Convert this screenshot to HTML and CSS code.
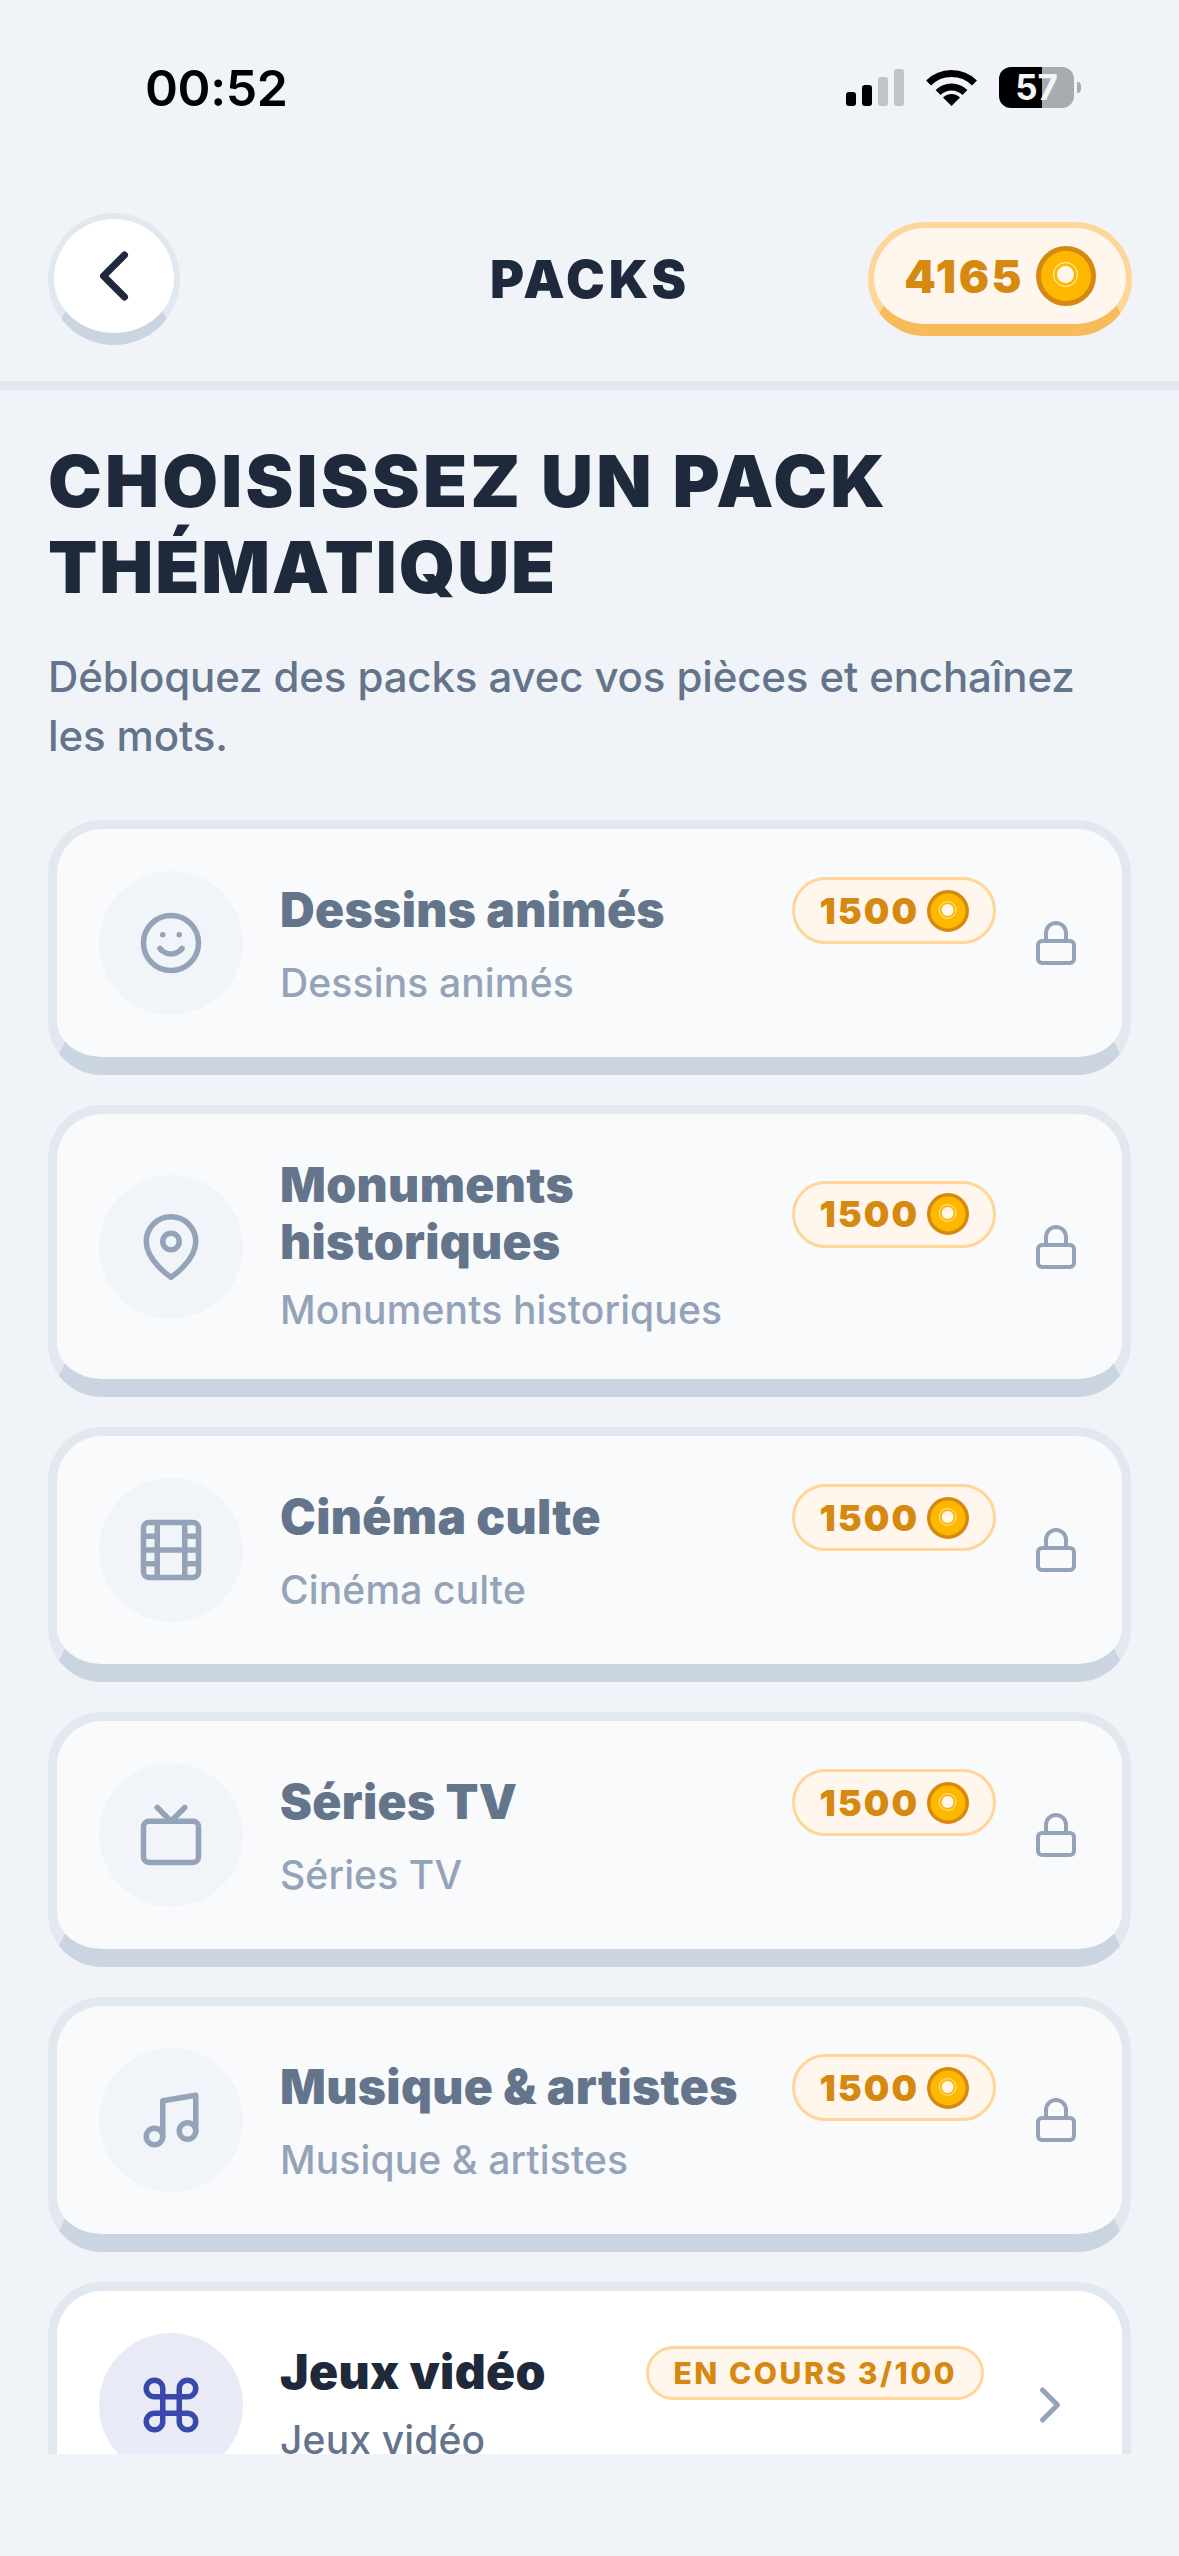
FILE: index.html
```html
<!DOCTYPE html>
<html lang="fr">
<head>
<meta charset="utf-8">
<title>Packs</title>
<link rel="stylesheet" href="styles.css">
</head>
<body>
<svg class="defs" aria-hidden="true">
  <symbol id="coin" viewBox="0 0 60 60">
    <circle cx="30" cy="30" r="27.5" fill="#ffb800" stroke="#d68910" stroke-width="5"/>
    <circle cx="29.5" cy="28.5" r="12" fill="none" stroke="#fff7ed" stroke-width="1"/>
    <circle cx="29.5" cy="28.5" r="8.5" fill="#fff7ed"/>
  </symbol>
  <symbol id="lock" viewBox="0 0 24 24">
    <rect x="3" y="11" width="18" height="11" rx="2"/>
    <path d="M7 11V7a5 5 0 0 1 10 0v4"/>
  </symbol>
</svg>
<div class="app">
  <div class="status">
    <span class="time">00:52</span>
    <div class="status-icons">
      <div class="signal">
        <i class="bar b1"></i><i class="bar b2"></i><i class="bar b3 off"></i><i class="bar b4 off"></i>
      </div>
      <svg class="wifi" viewBox="0 0 51 37" width="51" height="37">
        <path d="M2.52 14.02A32.5 32.5 0 0 1 48.48 14.02" fill="none" stroke="#000" stroke-width="7"/>
        <path d="M12.07 23.57A19 19 0 0 1 38.93 23.57" fill="none" stroke="#000" stroke-width="7"/>
        <path d="M25.5 37L17 28.5A12 12 0 0 1 34 28.5Z" fill="#000"/>
      </svg>
      <div class="battery">57</div>
    </div>
  </div>
  <header class="topbar">
    <button class="back" type="button" aria-label="Retour">
      <svg class="ico" viewBox="0 0 24 24" width="84" height="84"><path d="M15 18l-6-6 6-6"/></svg>
    </button>
    <h1 class="page-title">PACKS</h1>
    <div class="wallet">
      <span>4165</span>
      <svg width="60" height="60"><use href="#coin"/></svg>
    </div>
  </header>
  <main class="scroll">
    <h2 class="headline"><span class="line-a">CHOISISSEZ UN PACK</span> <span class="line-b">THÉMATIQUE</span></h2>
    <p class="lead">Débloquez des packs avec vos pièces et enchaînez les mots.</p>
    <div class="cards">
      <article class="card locked">
        <div class="round">
          <svg class="ico" viewBox="0 0 24 24" width="66" height="66"><circle cx="12" cy="12" r="10"/><path d="M8 14s1.5 2 4 2 4-2 4-2"/><path d="M9 9h.01M15 9h.01"/></svg>
        </div>
        <div class="body">
          <div class="row"><h3 class="name">Dessins animés</h3><div class="tag"><span>1500</span><svg width="42" height="42"><use href="#coin"/></svg></div></div>
          <p class="sub">Dessins animés</p>
        </div>
        <svg class="ico end" viewBox="0 0 24 24" width="48" height="48"><use href="#lock"/></svg>
      </article>
      <article class="card locked">
        <div class="round">
          <svg class="ico" viewBox="0 0 24 24" width="66" height="66"><path d="M21 10c0 7-9 13-9 13s-9-6-9-13a9 9 0 0 1 18 0z"/><circle cx="12" cy="10" r="3"/></svg>
        </div>
        <div class="body">
          <div class="row"><h3 class="name">Monuments historiques</h3><div class="tag"><span>1500</span><svg width="42" height="42"><use href="#coin"/></svg></div></div>
          <p class="sub">Monuments historiques</p>
        </div>
        <svg class="ico end" viewBox="0 0 24 24" width="48" height="48"><use href="#lock"/></svg>
      </article>
      <article class="card locked">
        <div class="round">
          <svg class="ico" viewBox="0 0 24 24" width="66" height="66"><rect x="2" y="2" width="20" height="20" rx="2"/><path d="M7 2v20M17 2v20M2 12h20M2 7h5M2 17h5M17 17h5M17 7h5"/></svg>
        </div>
        <div class="body">
          <div class="row"><h3 class="name">Cinéma culte</h3><div class="tag"><span>1500</span><svg width="42" height="42"><use href="#coin"/></svg></div></div>
          <p class="sub">Cinéma culte</p>
        </div>
        <svg class="ico end" viewBox="0 0 24 24" width="48" height="48"><use href="#lock"/></svg>
      </article>
      <article class="card locked">
        <div class="round">
          <svg class="ico" viewBox="0 0 24 24" width="66" height="66"><rect x="2" y="7" width="20" height="15" rx="2"/><path d="M17 2l-5 5-5-5"/></svg>
        </div>
        <div class="body">
          <div class="row"><h3 class="name">Séries TV</h3><div class="tag"><span>1500</span><svg width="42" height="42"><use href="#coin"/></svg></div></div>
          <p class="sub">Séries TV</p>
        </div>
        <svg class="ico end" viewBox="0 0 24 24" width="48" height="48"><use href="#lock"/></svg>
      </article>
      <article class="card locked">
        <div class="round">
          <svg class="ico" viewBox="0 0 24 24" width="66" height="66"><path d="M9 18V5l12-2v13"/><circle cx="6" cy="18" r="3"/><circle cx="18" cy="16" r="3"/></svg>
        </div>
        <div class="body">
          <div class="row"><h3 class="name">Musique &amp; artistes</h3><div class="tag"><span>1500</span><svg width="42" height="42"><use href="#coin"/></svg></div></div>
          <p class="sub">Musique &amp; artistes</p>
        </div>
        <svg class="ico end" viewBox="0 0 24 24" width="48" height="48"><use href="#lock"/></svg>
      </article>
      <article class="card active">
        <div class="round">
          <svg class="ico" viewBox="0 0 24 24" width="66" height="66"><path d="M15 6v12a3 3 0 1 0 3-3H6a3 3 0 1 0 3 3V6a3 3 0 1 0-3 3h12a3 3 0 1 0-3-3"/></svg>
        </div>
        <div class="body">
          <div class="row"><h3 class="name">Jeux vidéo</h3><div class="tag progress"><span>EN COURS 3/100</span></div></div>
          <p class="sub">Jeux vidéo</p>
        </div>
        <svg class="ico end" viewBox="0 0 24 24" width="60" height="60"><path d="M9 18l6-6-6-6"/></svg>
      </article>
    </div>
  </main>
</div>
</body>
</html>
```

FILE: styles.css
```css
* { box-sizing: border-box; }
html, body { margin: 0; padding: 0; }
body {
  width: 1179px;
  height: 2556px;
  overflow: hidden;
  background: #f0f4f8;
  font-family: Inter, "Noto Sans", sans-serif;
  color: #1e293b;
}
.defs { display: none; }
.app {
  height: 2556px;
  display: flex;
  flex-direction: column;
  padding-bottom: 102px;
}

/* status bar */
.status {
  flex: none;
  height: 175px;
  display: flex;
  align-items: center;
  justify-content: space-between;
  padding: 0 98px 0 145px;
}
.time {
  font-size: 50px;
  font-weight: 600;
  letter-spacing: -0.4px;
  color: #000;
  line-height: 1;
}
.status-icons { display: flex; align-items: center; gap: 22px; }
.signal { display: flex; align-items: flex-end; gap: 6px; height: 37px; }
.bar { width: 10px; background: #000; border-radius: 3px; display: block; }
.bar.off { background: #bfc4c9; }
.b1 { height: 14px; }
.b2 { height: 21px; }
.b3 { height: 29px; }
.b4 { height: 37px; }
.battery {
  position: relative;
  width: 75px;
  height: 41px;
  margin-right: 7px;
  border-radius: 12px;
  background: linear-gradient(90deg, #000 0 57.3%, #a8acb0 57.3% 100%);
  color: #f4f5f6;
  font-size: 35px;
  font-weight: 700;
  line-height: 41px;
  text-align: center;
}
.battery::after {
  content: "";
  position: absolute;
  left: 78px;
  top: 15px;
  width: 4px;
  height: 11px;
  border-radius: 0 5px 5px 0;
  background: #a8acb0;
}

/* top bar */
.topbar {
  flex: none;
  display: grid;
  grid-template-columns: 1fr auto 1fr;
  align-items: center;
  padding: 38px 47px 36px 48px;
  border-bottom: 9px solid #e2e8f0;
}
.back {
  justify-self: start;
  width: 132px;
  height: 132px;
  padding: 0;
  display: flex;
  align-items: center;
  justify-content: center;
  background: #fff;
  border: 6px solid #e2e8f0;
  border-bottom: 12px solid #cbd5e1;
  border-radius: 50%;
}
.back .ico { stroke: #1e293b; }
.page-title {
  margin: 0;
  padding-top: 2px;
  font-size: 52px;
  font-weight: 900;
  letter-spacing: 3.9px;
  line-height: 1.2;
  color: #1e293b;
}
.wallet {
  justify-self: end;
  width: 264px;
  height: 114px;
  display: flex;
  align-items: center;
  justify-content: flex-end;
  gap: 12px;
  padding-right: 30px;
  background: #fff7ed;
  border: 6px solid #ffd699;
  border-bottom: 12px solid #f7bb5b;
  border-radius: 57px;
  color: #d68910;
  font-size: 45px;
  font-weight: 900;
  letter-spacing: 2.5px;
}
.wallet svg, .tag svg { display: block; flex: none; }

/* scrolling area */
.scroll {
  flex: 1;
  min-height: 0;
  overflow: hidden;
  padding: 48px 48px 0;
}
.headline {
  margin: 0;
  font-size: 72px;
  font-weight: 900;
  line-height: 86.4px;
  color: #1e293b;
}
.line-a { letter-spacing: 3.2px; }
.line-b { letter-spacing: 1.9px; }
.lead {
  margin: 36px 0 54.4px;
  font-size: 42px;
  font-weight: 500;
  line-height: 59.4px;
  letter-spacing: -0.13px;
  color: #64748b;
}

/* cards */
.cards { display: flex; flex-direction: column; gap: 30px; }
.card {
  display: flex;
  align-items: center;
  gap: 36px;
  padding: 42px;
  border: 9px solid #e2e8f0;
  border-bottom: 18px solid #cbd5e1;
  border-radius: 54px;
  background: #fff;
}
.card.locked { background: #f8fafc; }
.round {
  flex: none;
  width: 144px;
  height: 144px;
  border-radius: 50%;
  display: flex;
  align-items: center;
  justify-content: center;
}
.locked .round { background: #f1f5f9; }
.active .round { background: #e8eaf6; }
.ico {
  display: block;
  flex: none;
  fill: none;
  stroke: #94a3b8;
  stroke-width: 2;
  stroke-linecap: round;
  stroke-linejoin: round;
}
.active .round .ico { stroke: #3949ab; }
.body { flex: 1; min-width: 0; padding-left: 1px; }
.row {
  display: flex;
  align-items: center;
  justify-content: space-between;
  gap: 24px;
}
.name {
  margin: 0;
  font-size: 48px;
  font-weight: 900;
  line-height: 57px;
  letter-spacing: 0.35px;
}
.locked .name { color: #64748b; }
.active .name { color: #1e293b; }
.sub {
  margin: 12px 0 0;
  font-size: 39px;
  font-weight: 500;
  line-height: 55px;
  letter-spacing: 0.15px;
}
.locked .sub { color: #94a3b8; }
.active .sub { color: #64748b; }
.tag {
  flex: none;
  display: flex;
  align-items: center;
  gap: 8px;
  margin: 1px 0 -1px;
  padding: 9.5px 24px 9.5px 25px;
  background: #fff7ed;
  border: 3px solid #ffd699;
  border-radius: 34px;
  color: #d68910;
  font-size: 36px;
  font-weight: 900;
  line-height: 42px;
  letter-spacing: 2px;
}
.tag.progress {
  padding: 9px 24px;
  font-size: 30px;
  font-weight: 800;
  line-height: 30px;
  letter-spacing: 2.55px;
}
```
